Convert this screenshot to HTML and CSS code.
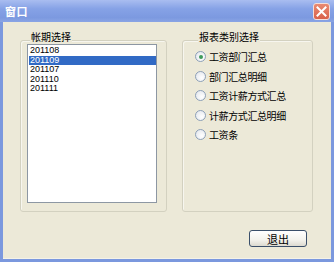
FILE: index.html
```html
<!DOCTYPE html>
<html lang="zh-CN">

<head>
    <meta charset="UTF-8">
    <title>窗口</title>
    <link rel="stylesheet" href="styles.css">
</head>

<body>
    <div class="window">
        <div class="titlebar">
            <span class="title">窗口</span>
            <span class="close">
                <svg width="11" height="11" viewBox="0 0 11 11">
                    <path d="M1.5 1.5 L9.5 9.5 M9.5 1.5 L1.5 9.5" stroke="#fff" stroke-width="2" stroke-linecap="square" />
                </svg>
            </span>
        </div>

        <div class="content">
            <div class="groups">
                <div class="group periodGroup">
                    <span class="legend">帐期选择</span>
                    <ul class="listbox">
                        <li>201108</li>
                        <li class="selected">201109</li>
                        <li>201107</li>
                        <li>201110</li>
                        <li>201111</li>
                    </ul>
                </div>

                <div class="group typeGroup">
                    <span class="legend">报表类别选择</span>
                    <div class="radios">
                        <label class="radio"><span class="dot checked"></span>工资部门汇总</label>
                        <label class="radio"><span class="dot"></span>部门汇总明细</label>
                        <label class="radio"><span class="dot"></span>工资计薪方式汇总</label>
                        <label class="radio"><span class="dot"></span>计薪方式汇总明细</label>
                        <label class="radio"><span class="dot"></span>工资条</label>
                    </div>
                </div>
            </div>

            <div class="footer">
                <button class="btn">退出</button>
            </div>
        </div>
    </div>
</body>

</html>
```

FILE: styles.css
```css
body {
    margin: 0;
    font-family: "Noto Sans CJK SC", "Liberation Sans", sans-serif;
    background-color: #ece9d8;
}

.window {
    width: 334px;
    height: 262px;
    display: flex;
    flex-direction: column;
    background: #7b98de;
}

.titlebar {
    height: 22px;
    flex-shrink: 0;
    display: flex;
    align-items: center;
    justify-content: space-between;
    padding: 0 4px 0 5px;
    background: linear-gradient(#a9bdf0, #86a2e6 40%, #7c99e0 80%, #8aa4e4);
}

.title {
    color: #ffffff;
    font-size: 11px;
    font-weight: bold;
    line-height: 12px;
    letter-spacing: 0.5px;
}

.close {
    width: 15px;
    height: 15px;
    display: flex;
    align-items: center;
    justify-content: center;
    border: 1px solid #f4ded8;
    border-radius: 3px;
    background: linear-gradient(#e98a72, #d9614a);
}

.content {
    flex: 1;
    margin: 0 3px 3px 3px;
    background: #ece9d8;
    border-bottom: 1px solid #f4f2e8;
    display: flex;
    flex-direction: column;
}

.groups {
    display: flex;
    gap: 15px;
    padding: 18px 18px 0 17px;
}

.group {
    height: 172px;
    box-sizing: border-box;
    border: 1px solid #d3d1c0;
    border-radius: 3px;
    box-shadow: inset 1px 1px 0 #f7f6ef;
    display: flex;
    flex-direction: column;
}

.legend {
    align-self: flex-start;
    margin: -10px 0 0 3px;
    padding: 0 1px;
    background: #ece9d8;
    font-size: 10px;
    line-height: 12px;
    color: #000000;
}

.periodGroup {
    width: 147px;
    padding: 0 9px 8px 6px;
}

.typeGroup {
    width: 131px;
    padding: 0 4px 0 12px;
}

.listbox {
    list-style: none;
    margin: 1px 0 0 0;
    padding: 1px 0 0 1px;
    height: 159px;
    box-sizing: border-box;
    background: #ffffff;
    border: 1px solid #8d97a3;
    font-family: "Liberation Sans", sans-serif;
    font-size: 9px;
    line-height: 9.6px;
    color: #000000;
}

.listbox li {
    padding-left: 1px;
}

.listbox .selected {
    background: #316ac5;
    color: #ffffff;
}

.radios {
    margin-top: 4px;
}

.radio {
    display: flex;
    align-items: center;
    gap: 3px;
    height: 19.5px;
    font-size: 10px;
    letter-spacing: -0.4px;
    color: #000000;
}

.dot {
    width: 9px;
    height: 9px;
    border: 1px solid #8da0b8;
    border-radius: 50%;
    background: radial-gradient(circle at 65% 65%, #ffffff, #dfe3ea);
    display: flex;
    align-items: center;
    justify-content: center;
}

.dot.checked::after {
    content: "";
    width: 4px;
    height: 4px;
    border-radius: 50%;
    background: #3d9a5a;
}

.footer {
    display: flex;
    justify-content: flex-end;
    padding: 18px 24px 0 0;
}

.btn {
    width: 58px;
    height: 17px;
    padding: 0;
    border: 1px solid #3a4f6a;
    border-radius: 3px;
    background: linear-gradient(#ffffff, #f3f2ec 60%, #dcdad0);
    font-family: "Noto Sans CJK SC", sans-serif;
    font-size: 11px;
    line-height: 14px;
    color: #000000;
}
```
